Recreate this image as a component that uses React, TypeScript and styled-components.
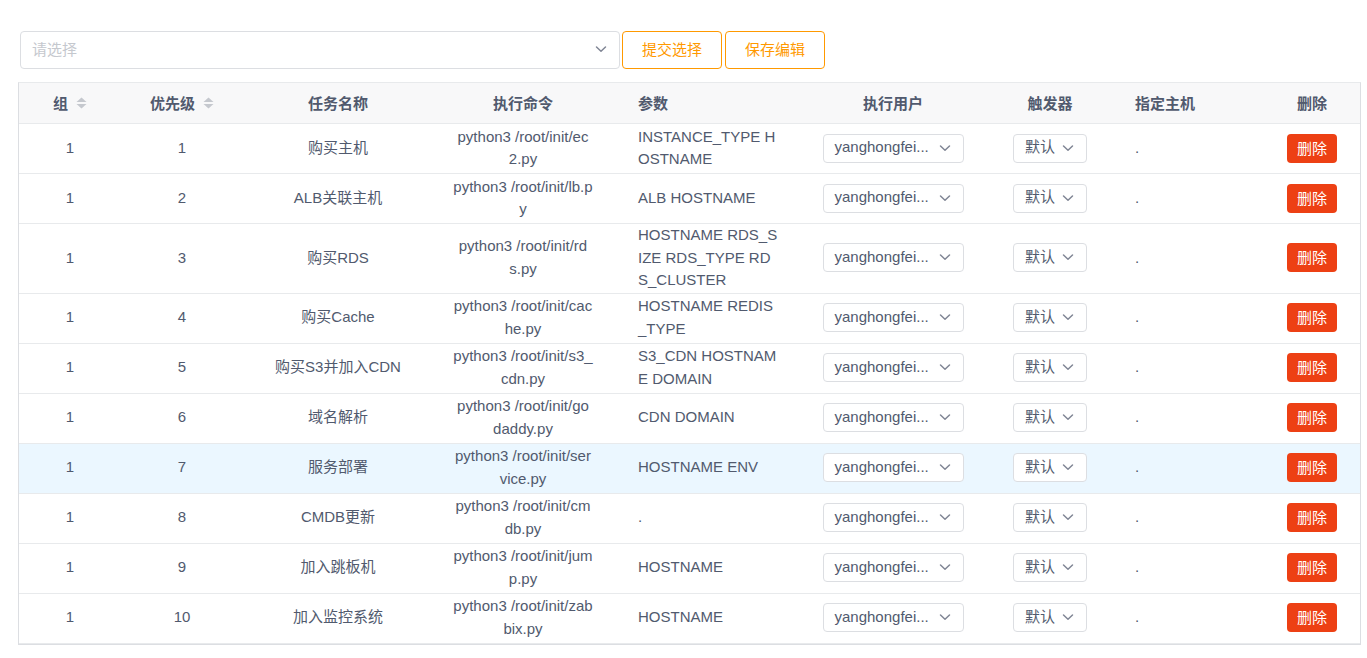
import React from "react";
import styled, { createGlobalStyle } from "styled-components";

const Global = createGlobalStyle`
  html, body { margin: 0; padding: 0; background: #fff; }
  body { font-family: "Liberation Sans", Arial, "Noto Sans CJK SC", sans-serif; color: #515a6e; }
  * { box-sizing: border-box; }
`;

const Page = styled.div`
  padding: 31px 0 0 18px;
`;

const Toolbar = styled.div`
  display: flex;
  align-items: center;
  gap: 2px;
  margin-left: 2px;
  height: 38px;
`;

const SelectBox = styled.div<{ $w: number; $h: number; $pb?: number }>`
  width: ${(p) => p.$w}px;
  height: ${(p) => p.$h}px;
  border: 1px solid #dcdee2;
  border-radius: 4px;
  background: #fff;
  display: flex;
  align-items: center;
  justify-content: space-between;
  padding: 0 12px ${(p) => p.$pb ?? 0}px 11px;
  font-size: 15px;
  color: #515a6e;
  white-space: nowrap;
  overflow: hidden;
`;

const Placeholder = styled.span`
  color: #c5c8ce;
`;

const GhostButton = styled.button<{ $ml?: number }>`
  height: 38px;
  width: 100px;
  border: 1px solid #ff9900;
  border-radius: 4px;
  background: #fff;
  color: #ff9900;
  font-family: inherit;
  font-size: 15px;
  padding: 0 0 3px;
  margin-left: ${(p) => p.$ml ?? 0}px;
`;

const TableWrap = styled.div`
  margin-top: 13px;
  width: 1343px;
  border: 1px solid #dcdee2;
  border-top-color: #e8eaec;
`;

const Table = styled.table`
  border-collapse: separate;
  border-spacing: 0;
  table-layout: fixed;
  width: 1341px;
  font-size: 15px;
`;

const Th = styled.th<{ $align: string; $pl: number }>`
  height: 41px;
  background: #f8f8f9;
  border-bottom: 1px solid #e8eaec;
  font-weight: 700;
  color: #515a6e;
  text-align: ${(p) => p.$align};
  padding: 0 0 1px ${(p) => p.$pl}px;
  white-space: nowrap;
`;

const Row = styled.tr<{ $hover?: boolean }>`
  background: ${(p) => (p.$hover ? "#ebf7ff" : "#fff")};
`;

const Td = styled.td<{ $align: string; $pl: number }>`
  height: 50px;
  border-bottom: 1px solid #e8eaec;
  text-align: ${(p) => p.$align};
  padding: 0 0 1px ${(p) => p.$pl}px;
  line-height: 22.5px;
  vertical-align: middle;
  color: #515a6e;
`;

const Line = styled.div`
  white-space: nowrap;
`;

const HeadInner = styled.span`
  display: inline-flex;
  align-items: center;
  gap: 8px;
`;

const CellSelectWrap = styled.div<{ $align: string }>`
  display: flex;
  justify-content: ${(p) => p.$align};
`;

const DangerButton = styled.button`
  width: 50px;
  height: 29px;
  border: none;
  border-radius: 4px;
  background: #ed4014;
  color: #fff;
  font-family: inherit;
  font-size: 15px;
  padding: 0 0 2px;
`;

const Chevron = () => (
  <svg width="12" height="12" viewBox="0 0 12 12" fill="none">
    <polyline points="1.5,4 6,8.2 10.5,4" stroke="#808695" strokeWidth="1.5" strokeLinecap="round" strokeLinejoin="round" />
  </svg>
);

const SortIcon = () => (
  <svg width="11" height="12" viewBox="0 0 11 12">
    <polygon points="5.5,0.5 10.5,5 0.5,5" fill="#c5c8ce" />
    <polygon points="0.5,7 10.5,7 5.5,11.5" fill="#c5c8ce" />
  </svg>
);

type Col = { key: string; title: string; width: number; align: "center" | "left"; pl: number; sort?: boolean };

const cols: Col[] = [
  { key: "group", title: "组", width: 102, align: "center", pl: 0, sort: true },
  { key: "prio", title: "优先级", width: 122, align: "center", pl: 0, sort: true },
  { key: "name", title: "任务名称", width: 190, align: "center", pl: 0 },
  { key: "cmd", title: "执行命令", width: 180, align: "center", pl: 0 },
  { key: "params", title: "参数", width: 175, align: "left", pl: 25 },
  { key: "user", title: "执行用户", width: 210, align: "center", pl: 0 },
  { key: "trigger", title: "触发器", width: 104, align: "center", pl: 0 },
  { key: "host", title: "指定主机", width: 162, align: "left", pl: 33 },
  { key: "del", title: "删除", width: 96, align: "center", pl: 0 },
];

type Task = { prio: number; name: string; cmd: string[]; params: string[] };

const tasks: Task[] = [
  { prio: 1, name: "购买主机", cmd: ["python3 /root/init/ec", "2.py"], params: ["INSTANCE_TYPE H", "OSTNAME"] },
  { prio: 2, name: "ALB关联主机", cmd: ["python3 /root/init/lb.p", "y"], params: ["ALB HOSTNAME"] },
  { prio: 3, name: "购买RDS", cmd: ["python3 /root/init/rd", "s.py"], params: ["HOSTNAME RDS_S", "IZE RDS_TYPE RD", "S_CLUSTER"] },
  { prio: 4, name: "购买Cache", cmd: ["python3 /root/init/cac", "he.py"], params: ["HOSTNAME REDIS", "_TYPE"] },
  { prio: 5, name: "购买S3并加入CDN", cmd: ["python3 /root/init/s3_", "cdn.py"], params: ["S3_CDN HOSTNAM", "E DOMAIN"] },
  { prio: 6, name: "域名解析", cmd: ["python3 /root/init/go", "daddy.py"], params: ["CDN DOMAIN"] },
  { prio: 7, name: "服务部署", cmd: ["python3 /root/init/ser", "vice.py"], params: ["HOSTNAME ENV"] },
  { prio: 8, name: "CMDB更新", cmd: ["python3 /root/init/cm", "db.py"], params: ["."] },
  { prio: 9, name: "加入跳板机", cmd: ["python3 /root/init/jum", "p.py"], params: ["HOSTNAME"] },
  { prio: 10, name: "加入监控系统", cmd: ["python3 /root/init/zab", "bix.py"], params: ["HOSTNAME"] },
];

export default function App() {
  return (
    <Page>
      <Global />
      <Toolbar>
        <SelectBox $w={600} $h={38} $pb={3}>
          <Placeholder>请选择</Placeholder>
          <Chevron />
        </SelectBox>
        <GhostButton>提交选择</GhostButton>
        <GhostButton $ml={1}>保存编辑</GhostButton>
      </Toolbar>
      <TableWrap>
        <Table>
          <colgroup>
            {cols.map((c) => (
              <col key={c.key} style={{ width: c.width }} />
            ))}
          </colgroup>
          <thead>
            <tr>
              {cols.map((c) => (
                <Th key={c.key} $align={c.align} $pl={c.pl}>
                  {c.sort ? (
                    <HeadInner>
                      {c.title}
                      <SortIcon />
                    </HeadInner>
                  ) : (
                    c.title
                  )}
                </Th>
              ))}
            </tr>
          </thead>
          <tbody>
            {tasks.map((t) => (
              <Row key={t.prio} $hover={t.prio === 7}>
                <Td $align="center" $pl={0}>1</Td>
                <Td $align="center" $pl={0}>{t.prio}</Td>
                <Td $align="center" $pl={0}>{t.name}</Td>
                <Td $align="center" $pl={0}>
                  {t.cmd.map((l, i) => (
                    <Line key={i}>{l}</Line>
                  ))}
                </Td>
                <Td $align="left" $pl={25}>
                  {t.params.map((l, i) => (
                    <Line key={i}>{l}</Line>
                  ))}
                </Td>
                <Td $align="center" $pl={0}>
                  <CellSelectWrap $align="center">
                    <SelectBox $w={141} $h={29} $pb={1}>
                      <span>yanghongfei...</span>
                      <Chevron />
                    </SelectBox>
                  </CellSelectWrap>
                </Td>
                <Td $align="center" $pl={0}>
                  <CellSelectWrap $align="center">
                    <SelectBox $w={74} $h={29} $pb={1}>
                      <span>默认</span>
                      <Chevron />
                    </SelectBox>
                  </CellSelectWrap>
                </Td>
                <Td $align="left" $pl={33}>.</Td>
                <Td $align="center" $pl={0}>
                  <DangerButton>删除</DangerButton>
                </Td>
              </Row>
            ))}
          </tbody>
        </Table>
      </TableWrap>
    </Page>
  );
}
